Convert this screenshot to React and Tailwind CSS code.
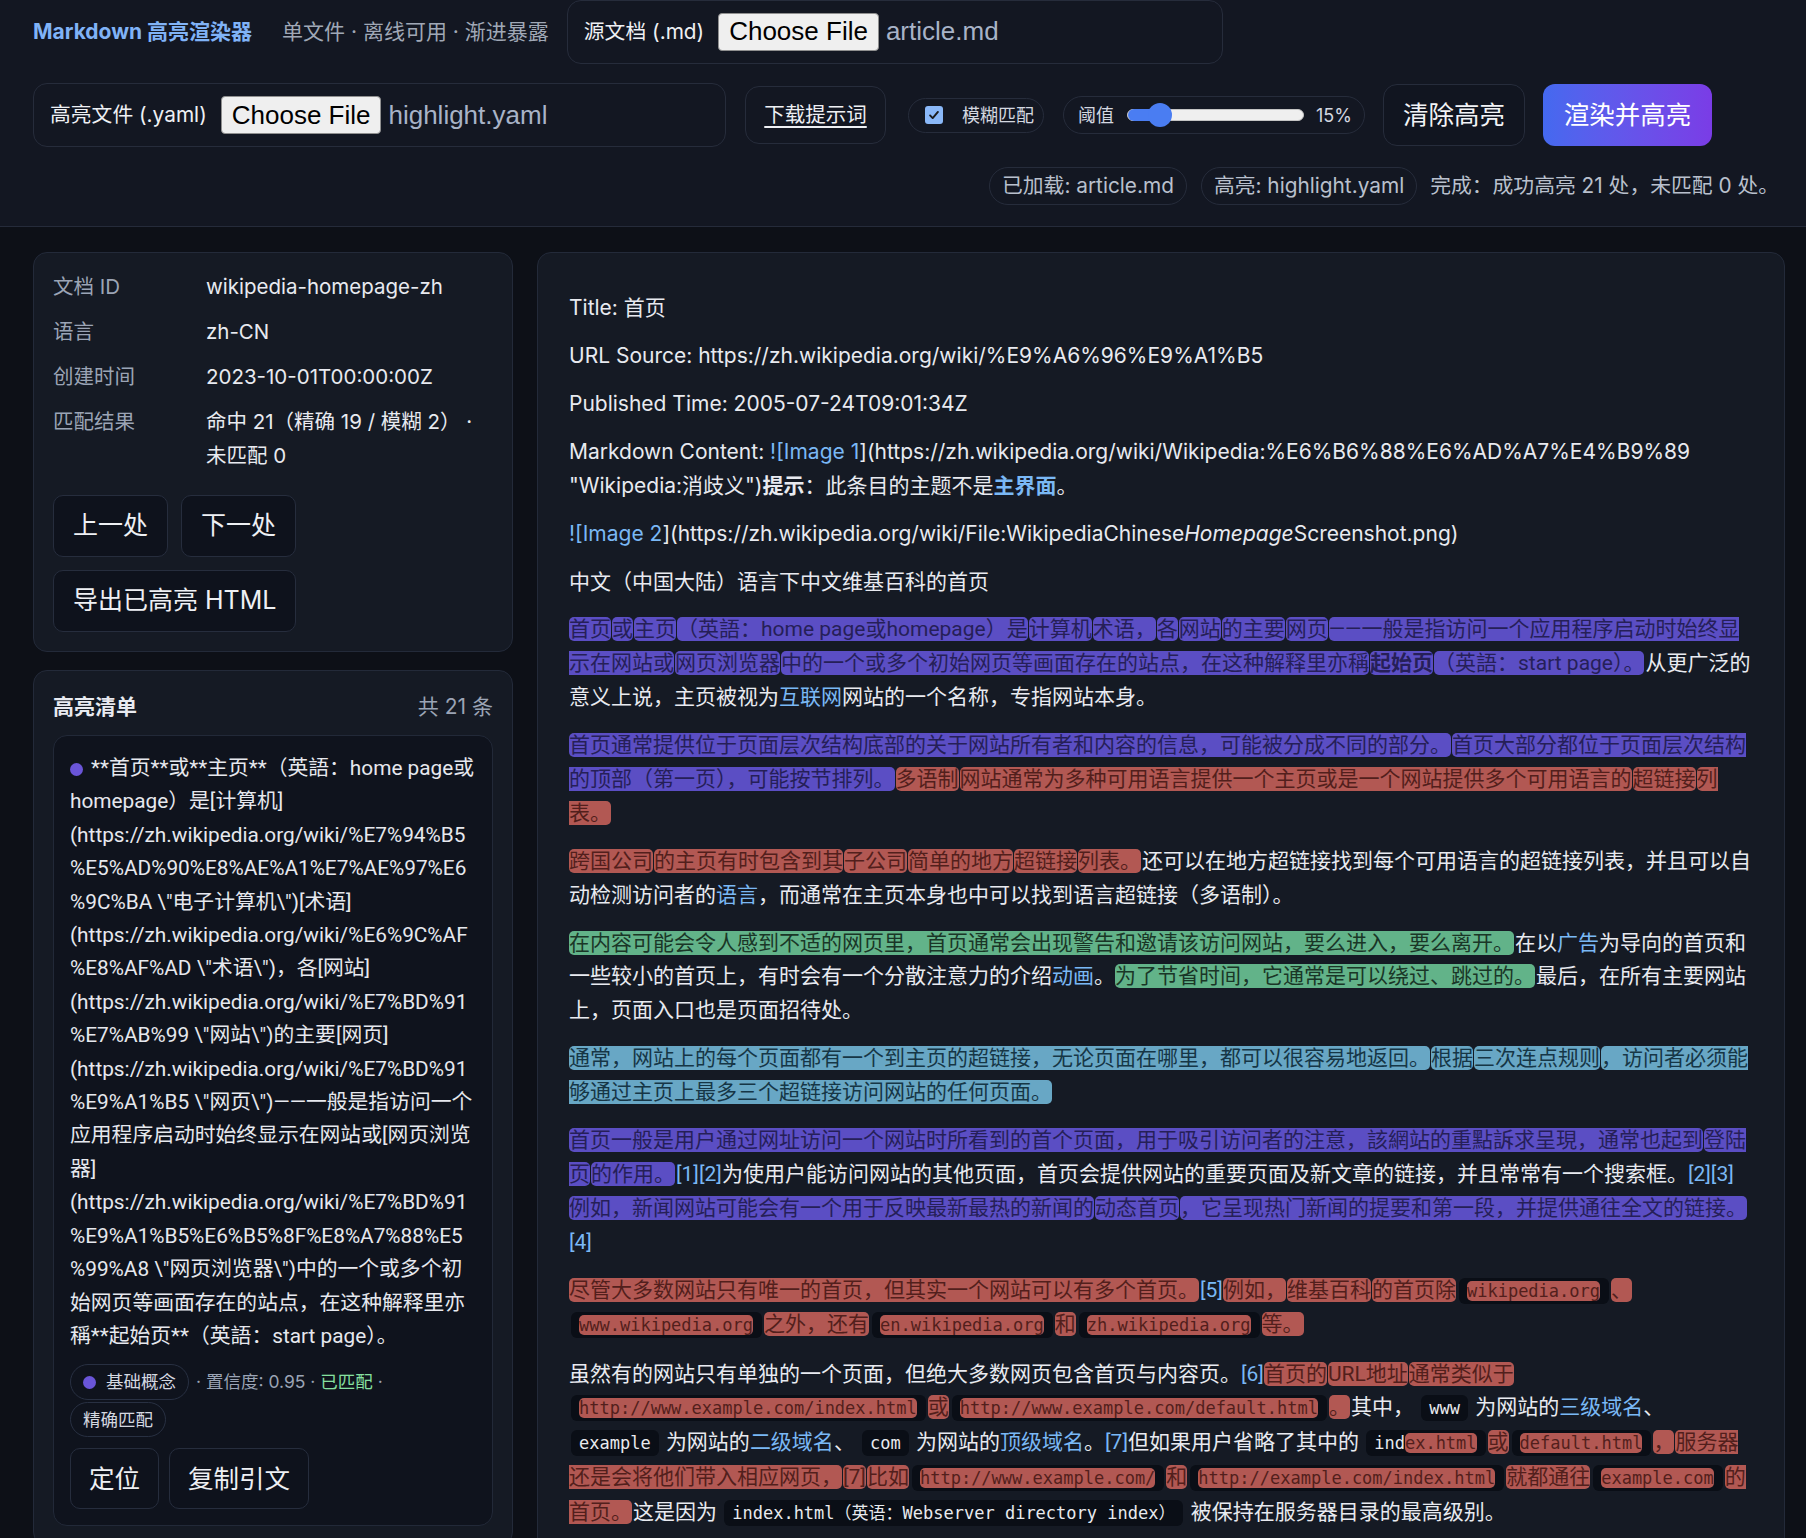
import React from 'react';

const tone = {
    p: 'bg-[#5b4ec4] text-[#261f58]',
    r: 'bg-[#b25853] text-[#521f1c]',
    g: 'bg-[#62b389] text-[#1a3627]',
    t: 'bg-[#68a7c5] text-[#163646]',
};

// one highlight mark
const M = ({ c = 'p', b, children }) => (
    <span className={`${tone[c]} rounded-[5px] mr-px ${b ? 'font-bold' : ''}`}>{children}</span>
);

const C = ({ children }) => (
    <code className="font-['DejaVu_Sans_Mono','Noto_Sans_CJK_SC',monospace] text-[17px] bg-[#0a0e16] text-[#e8eaee] px-[8px] py-[3px] rounded-[6px] mx-[2px]">
        {children}
    </code>
);

const A = ({ children }) => <span className="text-[#7ab8f5]">{children}</span>;

const Btn = ({ children, className = '' }) => (
    <button className={`h-[62px] px-[19px] text-[25px] text-[#eef0f4] rounded-[10px] border border-[#262d3d] bg-[#0e121c] ${className}`}>
        {children}
    </button>
);

const FakeFile = ({ label, file, width }) => (
    <div className={`${width} h-[64px] border border-[#262c3b] rounded-[14px] flex items-center px-[16px]`}>
        <span className="text-[20.8px] text-[#eef0f4]">{label}</span>
        <span className="ml-[14px] h-[38px] px-[10px] flex items-center bg-[#efefef] border border-[#8f8f8f] rounded-[4px] text-black text-[26px] font-['Liberation_Sans',Arial,sans-serif]">
            Choose File
        </span>
        <span className="ml-[7px] text-[26px] text-[#a8b3c7] font-['Liberation_Sans',Arial,sans-serif]">{file}</span>
    </div>
);

const itemText =
    '**首页**或**主页**（英語：home page或homepage）是[计算机](https://zh.wikipedia.org/wiki/%E7%94%B5%E5%AD%90%E8%AE%A1%E7%AE%97%E6%9C%BA \\"电子计算机\\")[术语](https://zh.wikipedia.org/wiki/%E6%9C%AF%E8%AF%AD \\"术语\\")，各[网站](https://zh.wikipedia.org/wiki/%E7%BD%91%E7%AB%99 \\"网站\\")的主要[网页](https://zh.wikipedia.org/wiki/%E7%BD%91%E9%A1%B5 \\"网页\\")——一般是指访问一个应用程序启动时始终显示在网站或[网页浏览器](https://zh.wikipedia.org/wiki/%E7%BD%91%E9%A1%B5%E6%B5%8F%E8%A7%88%E5%99%A8 \\"网页浏览器\\")中的一个或多个初始网页等画面存在的站点，在这种解释里亦稱**起始页**（英語：start page）。';

const App = () => {
    return (
        <div className="min-h-screen bg-[#0d1017] text-[#e8eaf0] font-['Inter','Noto_Sans_CJK_SC',sans-serif]">
            {/* Header */}
            <header className="bg-[#131722] border-b border-[#252b3a] pl-[33px] pr-[27px] pb-[21px]">
                <div className="flex items-center h-[63px]">
                    <h1 className="text-[21px] font-bold text-[#80b3f7]">Markdown 高亮渲染器</h1>
                    <span className="ml-[30px] text-[21px] text-[#a0a8b6]">单文件 · 离线可用 · 渐进暴露</span>
                    <div className="ml-[18px]">
                        <FakeFile label="源文档 (.md)" file="article.md" width="w-[656px]" />
                    </div>
                </div>

                <div className="mt-[20px] flex items-center">
                    <FakeFile label="高亮文件 (.yaml)" file="highlight.yaml" width="w-[693px]" />
                    <button className="ml-[19px] w-[141px] h-[58px] border border-[#262c3b] rounded-[14px] text-[20.5px] text-[#eef0f4] underline underline-offset-4">
                        下载提示词
                    </button>
                    <label className="ml-[22px] w-[136px] h-[35px] border border-[#262c3b] rounded-full flex items-center pl-[16px] gap-[19px]">
                        <span className="w-[18px] h-[18px] rounded-[3px] bg-[#8ab8f8] flex items-center justify-center">
                            <svg viewBox="0 0 16 16" className="w-[14px] h-[14px]">
                                <path d="M3.5 8.5l3 3 6-7" fill="none" stroke="#1b1b1b" strokeWidth="2.2" strokeLinecap="round" strokeLinejoin="round" />
                            </svg>
                        </span>
                        <span className="text-[18px] text-[#d4d8e0]">模糊匹配</span>
                    </label>
                    <div className="ml-[19px] w-[302px] h-[38px] border border-[#262c3b] rounded-full flex items-center pl-[14px]">
                        <span className="text-[18px] text-[#d4d8e0]">阈值</span>
                        <span className="relative ml-[13px] w-[177px] h-[12px] rounded-full bg-[#efefef] border border-[#c4c4c4]">
                            <span className="absolute left-0 top-[-1px] h-[12px] w-[34px] rounded-l-full bg-[#4a7df2]" />
                            <span className="absolute left-[20px] top-1/2 -translate-y-1/2 w-[24px] h-[24px] rounded-full bg-[#4a7df2]" />
                        </span>
                        <span className="ml-[12px] text-[18px] text-[#d4d8e0]">15%</span>
                    </div>
                    <button className="ml-[18px] w-[142px] h-[62px] border border-[#262c3b] rounded-[14px] bg-[#111520] text-[25.5px] text-[#f2f3f6]">
                        清除高亮
                    </button>
                    <button className="ml-[18px] w-[169px] h-[62px] rounded-[12px] bg-gradient-to-r from-[#4469ef] to-[#7a3ce6] text-[25.5px] text-white">
                        渲染并高亮
                    </button>
                </div>

                <div className="mt-[20px] flex items-center justify-end text-[20.8px] text-[#b9c0cd]">
                    <span className="h-[38px] px-[12px] flex items-center border border-[#262c3b] rounded-full">已加载: article.md</span>
                    <span className="ml-[14px] h-[38px] px-[12px] flex items-center border border-[#262c3b] rounded-full">高亮: highlight.yaml</span>
                    <span className="ml-[13px]">完成：成功高亮 21 处，未匹配 0 处。</span>
                </div>
            </header>

            {/* Body */}
            <main className="flex items-start gap-[24px] pl-[33px] pr-[21px] pt-[25px] pb-[40px]">
                <aside className="w-[480px] shrink-0 flex flex-col gap-[18px]">
                    {/* Meta */}
                    <div className="rounded-[14px] border border-[#232a39] bg-[#151a24] px-[19px] pt-[17px] pb-[19px]">
                        <div className="grid grid-cols-[153px_1fr] gap-y-[11px] text-[20.5px] leading-[34px]">
                            <span className="text-[#9ba4b5]">文档 ID</span>
                            <span>wikipedia-homepage-zh</span>
                            <span className="text-[#9ba4b5]">语言</span>
                            <span>zh-CN</span>
                            <span className="text-[#9ba4b5]">创建时间</span>
                            <span>2023-10-01T00:00:00Z</span>
                            <span className="text-[#9ba4b5]">匹配结果</span>
                            <span>命中 21（精确 19 / 模糊 2） · 未匹配 0</span>
                        </div>
                        <div className="mt-[22px] flex gap-[13px]">
                            <Btn>上一处</Btn>
                            <Btn>下一处</Btn>
                        </div>
                        <div className="mt-[13px] flex">
                            <Btn>导出已高亮 HTML</Btn>
                        </div>
                    </div>

                    {/* Highlight list */}
                    <div className="rounded-[14px] border border-[#232a39] bg-[#151a24] p-[19px]">
                        <div className="flex items-center justify-between leading-[34px]">
                            <h2 className="text-[21px] font-bold">高亮清单</h2>
                            <span className="text-[21px] text-[#9ba4b5]">共 21 条</span>
                        </div>
                        <div className="mt-[11px] rounded-[14px] border border-[#222938] bg-[#0f131d] p-[16px]">
                            <p className="font-['Roboto','Noto_Sans_CJK_SC',sans-serif] text-[20.8px] leading-[33.4px] text-[#e6e8ee] break-words">
                                <span className="inline-block w-[13px] h-[13px] rounded-full bg-[#6a55d8] mr-[8px] align-middle" />
                                {itemText}
                            </p>
                            <div className="mt-[11px] flex flex-wrap items-center gap-x-[7px] gap-y-[2px] text-[17.5px]">
                                <span className="h-[36px] px-[12px] flex items-center gap-[10px] border border-[#283042] rounded-full text-[#d4d8e0]">
                                    <span className="w-[13px] h-[13px] rounded-full bg-[#6a55d8]" />
                                    基础概念
                                </span>
                                <span className="text-[#9ba4b5]">
                                    · 置信度: 0.95 · <span className="text-[#86e0a0]">已匹配</span> ·
                                </span>
                                <span className="h-[35px] px-[12px] flex items-center border border-[#283042] rounded-full text-[#d4d8e0]">
                                    精确匹配
                                </span>
                            </div>
                            <div className="mt-[11px] flex gap-[10px]">
                                <Btn className="!h-[61px] !px-[18px] !text-[25.5px]">定位</Btn>
                                <Btn className="!h-[61px] !px-[18px] !text-[25.5px]">复制引文</Btn>
                            </div>
                        </div>
                    </div>
                </aside>

                {/* Rendered document */}
                <section className="flex-1 min-w-0 rounded-[14px] border border-[#232a39] bg-[#151a24] px-[31px] pt-[38px] pb-[40px] font-['Roboto','Noto_Sans_CJK_SC',sans-serif] text-[21px] leading-[33.8px] text-[#e8eaf0] flex flex-col gap-[14.3px]">
                    <div className="flex flex-col gap-[14.3px] font-['Inter','Noto_Sans_CJK_SC',sans-serif]">
                        <p>Title: 首页</p>
                        <p>URL Source: https://zh.wikipedia.org/wiki/%E9%A6%96%E9%A1%B5</p>
                        <p>Published Time: 2005-07-24T09:01:34Z</p>
                        <p>
                            Markdown Content: <A>![Image 1</A>](https://zh.wikipedia.org/wiki/Wikipedia:%E6%B6%88%E6%AD%A7%E4%B9%89 "Wikipedia:消歧义")
                            <b>提示</b>：此条目的主题不是<b className="text-[#7ab8f5]">主界面</b>。
                        </p>
                        <p>
                            <A>![Image 2</A>](https://zh.wikipedia.org/wiki/File:WikipediaChinese<i>Homepage</i>Screenshot.png)
                        </p>
                        <p>中文（中国大陆）语言下中文维基百科的首页</p>
                    </div>
                    <p>
                        <M>首页</M><M>或</M><M>主页</M><M>（英語：home page或homepage）是</M><M>计算机</M><M>术语，</M><M>各</M><M>网站</M><M>的主要</M><M>网页</M>
                        <M>——一般是指访问一个应用程序启动时始终显示在网站或</M><M>网页浏览器</M><M>中的一个或多个初始网页等画面存在的站点，在这种解释里亦稱</M><M b>起始页</M><M>（英語：start page）。</M>
                        从更广泛的意义上说，主页被视为<A>互联网</A>网站的一个名称，专指网站本身。
                    </p>
                    <p>
                        <M>首页通常提供位于页面层次结构底部的关于网站所有者和内容的信息，可能被分成不同的部分。</M><M>首页大部分都位于页面层次结构的顶部（第一页），可能按节排列。</M>
                        <M c="r">多语制</M><M c="r">网站通常为多种可用语言提供一个主页或是一个网站提供多个可用语言的</M><M c="r">超链接</M><M c="r">列表。</M>
                    </p>
                    <p>
                        <M c="r">跨国公司</M><M c="r">的主页有时包含到其</M><M c="r">子公司</M><M c="r">简单的地方</M><M c="r">超链接</M><M c="r">列表。</M>
                        还可以在地方超链接找到每个可用语言的超链接列表，并且可以自动检测访问者的<A>语言</A>，而通常在主页本身也中可以找到语言超链接（多语制）。
                    </p>
                    <p>
                        <M c="g">在内容可能会令人感到不适的网页里，首页通常会出现警告和邀请该访问网站，要么进入，要么离开。</M>
                        在以<A>广告</A>为导向的首页和一些较小的首页上，有时会有一个分散注意力的介绍<A>动画</A>。
                        <M c="g">为了节省时间，它通常是可以绕过、跳过的。</M>最后，在所有主要网站上，页面入口也是页面招待处。
                    </p>
                    <p>
                        <M c="t">通常，网站上的每个页面都有一个到主页的超链接，无论页面在哪里，都可以很容易地返回。</M><M c="t">根据</M><M c="t">三次连点规则</M>
                        <M c="t">，访问者必须能够通过主页上最多三个超链接访问网站的任何页面。</M>
                    </p>
                    <p>
                        <M>首页一般是用户通过网址访问一个网站时所看到的首个页面，用于吸引访问者的注意，該網站的重點訴求呈現，通常也起到</M><M>登陆页</M><M>的作用。</M>
                        <A>[1][2]</A>为使用户能访问网站的其他页面，首页会提供网站的重要页面及新文章的链接，并且常常有一个搜索框。<A>[2][3]</A>
                        <M>例如，新闻网站可能会有一个用于反映最新最热的新闻的</M><M>动态首页</M><M>，它呈现热门新闻的提要和第一段，并提供通往全文的链接。</M>
                        <A>[4]</A>
                    </p>
                    <p>
                        <M c="r">尽管大多数网站只有唯一的首页，但其实一个网站可以有多个首页。</M><A>[5]</A>
                        <M c="r">例如，</M><M c="r">维基百科</M><M c="r">的首页除</M>
                        <C><M c="r">wikipedia.org</M></C><M c="r">、</M>
                        <C><M c="r">www.wikipedia.org</M></C><M c="r">之外，还有</M>
                        <C><M c="r">en.wikipedia.org</M></C><M c="r">和</M>
                        <C><M c="r">zh.wikipedia.org</M></C><M c="r">等。</M>
                    </p>
                    <p>
                        虽然有的网站只有单独的一个页面，但绝大多数网页包含首页与内容页。<A>[6]</A>
                        <M c="r">首页的</M><M c="r">URL地址</M><M c="r">通常类似于</M>
                        <C><M c="r">http://www.example.com/index.html</M></C><M c="r">或</M>
                        <C><M c="r">http://www.example.com/default.html</M></C><M c="r">。</M>
                        其中，{' '}<C>www</C>{' '}为网站的<A>三级域名</A>、{' '}<C>example</C>{' '}为网站的<A>二级域名</A>、{' '}<C>com</C>{' '}为网站的<A>顶级域名</A>。<A>[7]</A>
                        但如果用户省略了其中的{' '}<C>ind<M c="r">ex.html</M></C><M c="r">或</M>
                        <C><M c="r">default.html</M></C><M c="r">，</M><M c="r">服务器还是会将他们带入相应网页，</M><M c="r">[7]</M><M c="r">比如</M>
                        <C><M c="r">http://www.example.com/</M></C><M c="r">和</M>
                        <C><M c="r">http://example.com/index.html</M></C><M c="r">就都通往</M>
                        <C><M c="r">example.com</M></C><M c="r">的首页。</M>
                        这是因为{' '}<C>index.html（英语：Webserver directory index）</C>{' '}被保持在服务器目录的最高级别。
                    </p>
                </section>
            </main>
        </div>
    );
};

export default App;
